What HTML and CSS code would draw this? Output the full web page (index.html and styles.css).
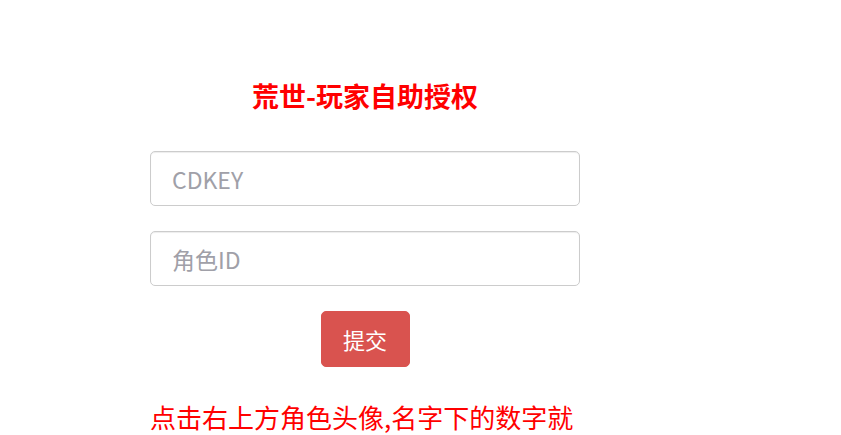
FILE: index.html
```html
<!DOCTYPE html>
<html lang="zh-CN">
<head>
    <meta charset="UTF-8">
    <meta name="viewport" content="width=device-width, initial-scale=1.0">
    <title>荒世-玩家自助授权</title>
    <link rel="stylesheet" href="styles.css">
</head>
<body>

    <div class="container">
        <h1>荒世-玩家自助授权</h1>

        <form class="auth-form">
            <input type="text" class="form-input" placeholder="CDKEY">
            <input type="text" class="form-input" placeholder="角色ID">
            <div class="btn-row">
                <button type="button" class="btn-submit">提交</button>
            </div>
        </form>

        <p class="tip">点击右上方角色头像,名字下的数字就是角色ID</p>
    </div>

</body>
</html>
```

FILE: styles.css
```css
* {
    margin: 0;
    padding: 0;
    box-sizing: border-box;
}

body {
    font-family: "Noto Sans CJK SC", "Noto Sans", sans-serif;
    background-color: #fff;
    color: #333;
}

.container {
    width: 430px;
    margin-left: 150px;
    padding-top: 78px;
}

h1 {
    text-align: center;
    font-size: 27px;
    line-height: 36px;
    font-weight: bold;
    color: #f00;
    margin-bottom: 37px;
}

.auth-form {
    display: flex;
    flex-direction: column;
    gap: 25px;
}

.form-input {
    width: 100%;
    height: 55px;
    padding: 0 21px;
    font-family: inherit;
    font-size: 23px;
    color: #555;
    border: 1px solid #ccc;
    border-radius: 5px;
    box-shadow: inset 0 1px 1px rgba(0, 0, 0, 0.075);
    outline: none;
}

.form-input::placeholder {
    color: #a0a0a8;
}

.btn-row {
    display: flex;
    justify-content: center;
}

.btn-submit {
    width: 89px;
    height: 56px;
    font-family: inherit;
    font-size: 22px;
    color: #fff;
    background-color: #d9534f;
    border: 1px solid #d9534f;
    border-radius: 5px;
    cursor: pointer;
}

.tip {
    margin-top: 32px;
    font-size: 26px;
    line-height: 36px;
    color: #f00;
}
```
